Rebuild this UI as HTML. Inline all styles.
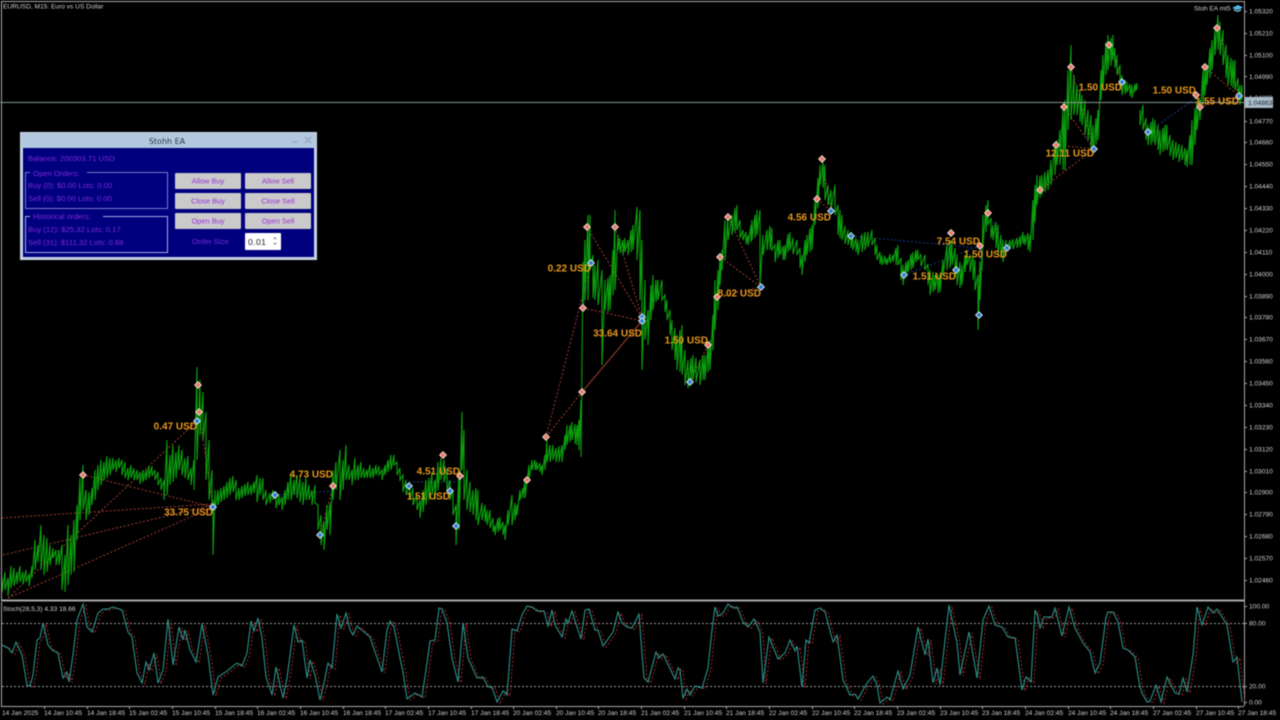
<!DOCTYPE html>
<html><head><meta charset="utf-8"><title>EURUSD M15</title>
<style>
html,body{margin:0;padding:0;background:#000;width:1280px;height:720px;overflow:hidden}
svg{display:block;filter:blur(.4px)}
text{font-family:"Liberation Sans",sans-serif}
.ax text{font-size:6.6px;fill:#cfcfcf}
.usd text{font-size:10px;font-weight:bold;fill:#e8981c;text-anchor:end}
.r{fill:#e87a68;stroke:#f6d8d0;stroke-width:1}
.b{fill:#2f7fd0;stroke:#d8e8f4;stroke-width:1}
.pt text{font-size:7.7px;fill:#7d28d4}
.bt text{font-size:7.4px;fill:#9a30d8;text-anchor:middle}
</style></head><body>
<svg width="1280" height="720" viewBox="0 0 1280 720" xmlns="http://www.w3.org/2000/svg">
<rect width="1280" height="720" fill="#000"/>
<!-- trade lines -->
<g fill="none" stroke="#a04030" stroke-width="1" stroke-dasharray="2 2">
<path d="M83 475L213 507M2 518L213 504M3 555L213 505M8 598L213 507M8 598L197 421M199 412L213 507"/>
<path d="M546 437L591 263M546 437L582 392M583 308L642 321M587 227L642 318M615 227L642 318"/>
<path d="M720 257L761 287M728 217L761 287M717 297L761 287M817 199L831 211M822 159L831 211"/>
<path d="M1064 107L1094 149M1071 67L1094 149M1040 190L1094 149M1056 145L1094 149M1109 45L1122 82M1217 28L1239 96M1205 67L1239 96M1200 107L1239 96M708 345L690 382M333 486L320 535M460 476L456 526"/>
</g>
<path d="M582 392L642 321" stroke="#a04030" stroke-width="1" fill="none"/>
<g fill="none" stroke="#1c3a88" stroke-width="1" stroke-dasharray="2 2">
<path d="M275 495L333 491M409 482L460 482M851 236L980 248M904 275L980 246M1007 248L988 213M1148 132L1196 98M591 263L583 308M450 491L443 455M979 315L980 246"/>
</g>
<!-- price -->
<polyline fill="none" stroke="#0aa00c" stroke-width="1.1" points="2,578 2,592 5,572 5,590 8,578 8,596 11,566 11,588 14,568 14,586 17,572 17,584 20,566 20,582 23,572 23,584 26,570 26,582 29,574 29,586 32,566 32,578 35,540 35,570 38,545 38,562 41,525 41,570 44,535 44,575 47,538 47,572 50,545 50,565 53,548 53,558 56,550 56,565 59,550 59,565 62,545 62,590 65,555 65,592 68,525 68,585 71,535 71,575 74,520 74,572 77,505 77,540 80,478 80,520 83,465 83,510 86,490 86,520 89,492 89,515 92,488 92,505 95,470 95,500 98,465 98,490 101,460 101,485 104,462 104,480 107,456 107,478 110,458 110,475 113,458 113,470 116,460 116,472 119,458 119,468 122,460 122,475 125,462 125,478 128,468 128,480 131,465 131,478 134,468 134,480 137,470 137,480 140,472 140,484 143,470 143,482 146,470 146,480 149,466 149,478 152,466 152,476 155,470 155,480 158,472 158,485 161,478 161,490 164,480 164,500 167,440 167,495 170,455 170,485 173,445 173,482 176,452 176,478 179,445 179,470 182,450 182,475 185,458 185,478 188,456 188,480 191,468 191,485 194,460 194,490 197,367 197,460 200,380 200,435 203,392 203,440 206,412 206,480 209,440 209,500 212,470 212,510 213,500 213,555 215,490 215,510 218,490 218,505 221,488 221,502 224,486 224,500 227,482 227,498 230,478 230,495 233,476 233,492 236,480 236,500 239,488 239,500 242,486 242,498 245,484 245,496 248,482 248,495 251,485 251,495 254,482 254,493 257,475 257,502 260,478 260,495 263,478 263,500 266,490 266,505 270,493 270,503 273,490 273,500 276,492 276,508 279,495 279,505 282,497 282,510 285,490 285,505 288,482 288,500 291,473 291,500 294,480 294,495 297,475 297,498 300,478 300,502 303,482 303,505 306,478 306,500 309,485 309,500 312,490 312,505 315,485 315,503 318,505 318,530 321,515 321,545 324,522 324,550 327,505 327,530 330,503 330,535 333,470 333,500 336,462 336,490 340,450 340,500 343,460 343,490 346,445 346,480 349,465 349,480 352,470 352,485 355,458 355,480 358,465 358,480 361,462 361,478 364,468 364,478 367,470 367,478 370,465 370,478 373,468 373,478 376,465 376,475 379,466 379,475 382,470 382,480 385,465 385,475 388,460 388,472 391,455 391,470 394,455 394,465 397,462 397,475 400,468 400,480 403,475 403,492 406,480 406,495 410,484 410,500 413,488 413,505 417,495 417,510 420,500 420,518 423,490 423,512 426,480 426,505 429,478 429,500 432,472 432,495 435,480 435,500 438,462 438,490 441,458 441,480 444,460 444,482 447,470 447,490 450,480 450,500 453,490 453,515 456,505 456,545 459,470 459,530 462,412 462,470 464,430 464,500 467,470 467,510 470,482 470,512 473,490 473,515 476,488 476,520 478,490 478,525 482,503 482,520 485,505 485,522 487,510 487,525 490,510 490,528 493,518 493,532 495,525 495,535 498,518 498,532 500,517 500,530 503,522 503,535 505,525 505,540 508,510 508,525 512,495 512,525 515,503 515,520 517,505 517,515 520,490 520,500 523,488 523,498 525,478 525,498 529,465 529,480 532,460 532,470 535,460 535,470 537,462 537,470 540,463 540,472 542,465 542,475 545,455 545,470 547,440 547,462 550,445 550,462 553,445 553,460 556,448 556,462 559,446 559,462 562,445 562,462 565,435 565,450 567,425 567,445 570,425 570,442 572,422 572,440 575,424 575,444 577,425 577,445 579,420 579,450 581,400 581,457 583,262 583,310 585,240 585,300 588,215 588,300 590,215 590,270 593,255 593,298 595,265 595,300 598,260 598,305 602,270 602,365 605,280 605,310 608,278 608,312 610,275 610,310 613,250 613,295 615,210 615,290 618,235 618,250 620,238 620,253 623,240 623,255 625,238 625,252 628,240 628,255 631,230 631,252 633,225 633,250 637,207 637,260 640,210 640,300 642,240 642,370 645,280 645,340 648,310 648,345 651,285 651,320 653,275 653,310 656,280 656,302 658,280 658,300 662,280 662,300 665,295 665,312 667,300 667,320 670,310 670,335 672,320 672,350 675,328 675,360 677,335 677,370 680,330 680,372 682,325 682,375 685,350 685,385 688,360 688,388 691,358 691,382 693,355 693,380 696,358 696,382 700,360 700,385 703,355 703,380 705,355 705,380 708,345 708,372 710,340 710,370 713,315 713,350 715,280 715,330 718,270 718,310 720,255 720,285 722,250 722,270 725,220 725,260 728,215 728,240 732,215 732,235 735,208 735,232 737,205 737,230 740,220 740,238 743,230 743,240 746,232 746,244 748,235 748,245 751,225 751,242 752,220 752,240 755,215 755,238 757,210 757,235 760,210 760,285 763,235 763,255 767,230 767,250 770,226 770,250 772,228 772,250 775,245 775,262 778,240 778,258 780,240 780,255 783,246 783,260 785,245 785,260 788,234 788,252 790,232 790,250 793,238 793,254 797,240 797,255 800,248 800,268 802,255 802,275 805,240 805,262 807,235 807,255 810,228 810,252 812,225 812,250 815,200 815,225 818,178 818,208 820,165 820,185 823,162 823,188 825,165 825,200 828,185 828,205 831,190 831,210 835,185 835,215 838,205 838,235 840,210 840,238 842,215 842,240 845,226 845,244 848,230 848,245 851,232 851,248 853,235 853,250 856,238 856,252 858,240 858,255 862,234 862,252 865,232 865,250 868,232 868,247 872,230 872,245 875,238 875,255 877,245 877,260 880,252 880,264 882,255 882,265 885,256 885,264 887,258 887,265 890,254 890,263 893,255 893,262 896,248 896,265 898,245 898,265 901,258 901,280 903,265 903,285 906,262 906,276 908,260 908,272 911,254 911,270 913,252 913,268 916,250 916,262 918,250 918,260 921,254 921,266 925,255 925,270 928,264 928,285 930,270 930,295 933,272 933,292 935,275 935,290 938,274 938,293 940,275 940,292 943,260 943,275 947,245 947,270 950,240 950,268 952,240 952,265 955,248 955,278 957,255 957,285 960,262 960,288 962,265 962,285 965,255 965,272 967,250 967,265 970,255 970,272 973,255 973,280 975,260 975,290 978,275 978,330 980,262 980,300 982,250 982,270 983,215 983,245 986,205 986,232 988,200 988,225 991,218 991,238 993,225 993,240 996,222 996,248 998,225 998,255 1001,235 1001,258 1003,240 1003,262 1006,240 1006,252 1010,240 1010,248 1013,239 1013,249 1017,238 1017,248 1020,236 1020,247 1023,232 1023,244 1025,235 1025,245 1028,233 1028,250 1030,235 1030,252 1033,200 1033,240 1035,185 1035,222 1037,175 1037,205 1040,176 1040,198 1042,175 1042,195 1045,172 1045,192 1048,170 1048,190 1051,160 1051,185 1055,145 1055,175 1057,140 1057,165 1060,130 1060,165 1063,110 1063,170 1065,100 1065,170 1068,70 1068,130 1071,45 1071,120 1074,75 1074,115 1077,85 1077,115 1080,90 1080,122 1082,95 1082,125 1085,100 1085,135 1088,110 1088,140 1091,115 1091,150 1093,125 1093,155 1096,118 1096,145 1098,110 1098,140 1101,70 1101,100 1103,55 1103,90 1106,42 1106,75 1108,35 1108,70 1111,38 1111,66 1113,35 1113,60 1115,48 1115,68 1117,55 1117,75 1120,65 1120,88 1122,75 1122,95 1125,80 1125,94 1127,82 1127,92 1130,84 1130,96 1132,85 1132,98 1135,84 1135,92 1137,83 1137,90"/>
<polyline fill="none" stroke="#0aa00c" stroke-width="1.1" points="1140,110 1140,125 1143,105 1143,130 1146,118 1146,140 1148,125 1148,145 1151,122 1151,145 1153,118 1153,142 1155,120 1155,145 1158,125 1158,150 1160,130 1160,155 1163,128 1163,152 1165,125 1165,150 1167,125 1167,150 1170,135 1170,156 1173,140 1173,160 1176,142 1176,158 1179,144 1179,162 1182,145 1182,160 1185,148 1185,165 1187,150 1187,167 1190,135 1190,165 1192,120 1192,165 1195,108 1195,145 1197,100 1197,130 1200,100 1200,120 1203,70 1203,105 1205,66 1205,95 1207,65 1207,85 1210,48 1210,78 1212,40 1212,70 1215,30 1215,55 1218,15 1218,50 1220,22 1220,55 1223,30 1223,65 1226,45 1226,78 1228,55 1228,85 1231,58 1231,86 1233,60 1233,88 1235,60 1235,90 1238,78 1238,100 1240,85 1240,105 1242,85 1242,100"/>
<!-- frame -->
<path d="M1 1.5H1244M1.5 1V600M1244.5 1V706" stroke="#a8a8a8" stroke-width="1" fill="none"/>
<path d="M1 600.5H1244" stroke="#a8a8a8" stroke-width="2" fill="none"/>
<path d="M1.5 602V706M1 706.5H1244" stroke="#a8a8a8" stroke-width="1" fill="none"/>
<!-- bid line -->
<path d="M0 102.5H1245" stroke="#8a9696" stroke-width="1" fill="none"/>
<!-- markers -->
<defs><path id="d" d="M0-3.3L3.3 0L0 3.3L-3.3 0Z"/></defs>
<g class="r">
<use href="#d" x="83" y="475"/><use href="#d" x="198" y="385"/><use href="#d" x="199" y="412"/><use href="#d" x="333" y="486"/><use href="#d" x="443" y="455"/><use href="#d" x="460" y="476"/><use href="#d" x="527" y="480"/><use href="#d" x="546" y="437"/><use href="#d" x="583" y="308"/><use href="#d" x="582" y="392"/><use href="#d" x="587" y="227"/><use href="#d" x="615" y="227"/><use href="#d" x="708" y="345"/><use href="#d" x="717" y="297"/><use href="#d" x="720" y="257"/><use href="#d" x="728" y="217"/><use href="#d" x="822" y="159"/><use href="#d" x="817" y="199"/><use href="#d" x="951" y="233"/><use href="#d" x="980" y="246"/><use href="#d" x="988" y="213"/><use href="#d" x="1040" y="190"/><use href="#d" x="1056" y="145"/><use href="#d" x="1064" y="107"/><use href="#d" x="1071" y="67"/><use href="#d" x="1109" y="45"/><use href="#d" x="1217" y="28"/><use href="#d" x="1205" y="67"/><use href="#d" x="1196" y="95"/><use href="#d" x="1200" y="107"/>
</g>
<g class="b">
<use href="#d" x="197" y="421"/><use href="#d" x="213" y="507"/><use href="#d" x="275" y="495"/><use href="#d" x="320" y="535"/><use href="#d" x="409" y="486"/><use href="#d" x="450" y="491"/><use href="#d" x="456" y="526"/><use href="#d" x="591" y="263"/><use href="#d" x="642" y="317"/><use href="#d" x="642" y="321"/><use href="#d" x="690" y="382"/><use href="#d" x="761" y="287"/><use href="#d" x="831" y="211"/><use href="#d" x="851" y="236"/><use href="#d" x="904" y="275"/><use href="#d" x="956" y="270"/><use href="#d" x="979" y="315"/><use href="#d" x="1007" y="248"/><use href="#d" x="1094" y="149"/><use href="#d" x="1122" y="82"/><use href="#d" x="1148" y="132"/><use href="#d" x="1239" y="96"/>
</g>
<!-- USD labels -->
<g class="usd">
<text x="197" y="429.5">0.47 USD</text><text x="213" y="515.5">33.75 USD</text><text x="333" y="477.5">4.73 USD</text><text x="460" y="474.5">4.51 USD</text><text x="450" y="499.5">1.51 USD</text><text x="591" y="271.5">0.22 USD</text><text x="642" y="336.5">33.64 USD</text><text x="708" y="343.5">1.50 USD</text><text x="761" y="296.5">8.02 USD</text><text x="831" y="220.5">4.56 USD</text><text x="980" y="244.5">7.54 USD</text><text x="1007" y="257.5">1.50 USD</text><text x="956" y="279.5">1.51 USD</text><text x="1094" y="156.5">12.11 USD</text><text x="1122" y="90.5">1.50 USD</text><text x="1196" y="93.5">1.50 USD</text><text x="1239" y="104.5">1.55 USD</text>
</g>
<!-- stochastic -->
<path d="M2 623.5H1244M2 686.5H1244" stroke="#9c9c9c" stroke-width="1" stroke-dasharray="2 2" fill="none"/>
<defs><polyline id="st" fill="none" points="2,645 8,648 12,653 16,642 22,655 27,685 30,686 33,675 37,640 40,638 43,623 48,645 52,650 58,653 63,678 67,672 69,682 73,655 77,620 83,604 87,627 92,632 98,613 103,609 108,609 113,607 122,610 128,632 132,637 137,673 142,683 146,662 149,670 154,653 158,683 163,670 168,619 173,665 179,627 183,640 185,630 190,650 196,662 202,624 208,655 213,695 218,677 227,671 237,663 242,666 247,653 251,621 254,631 258,618 262,638 266,677 272,695 276,667 283,698 287,678 294,625 298,642 302,640 307,678 310,660 315,675 320,700 324,683 328,663 332,668 337,614 341,628 346,613 350,630 353,635 357,626 370,637 375,652 382,672 387,630 390,621 394,627 400,658 403,672 407,699 415,693 422,697 427,663 430,641 435,640 439,608 442,609 447,623 452,658 458,682 463,623 468,658 477,678 483,677 488,687 492,687 497,702 503,691 507,695 512,629 517,631 522,615 527,606 532,607 537,611 544,611 548,626 552,610 555,625 562,637 566,619 568,623 572,611 578,630 581,639 585,610 589,609 595,630 598,630 603,646 613,632 618,612 622,623 627,627 632,628 639,614 642,653 644,678 648,682 656,652 659,658 663,654 675,679 678,668 680,670 683,698 687,689 690,695 695,686 702,688 708,668 712,630 715,607 718,616 723,613 728,604 733,608 737,607 743,622 748,627 754,619 760,632 763,683 769,637 778,659 785,653 790,640 795,651 797,646 802,687 806,640 809,643 815,610 820,608 825,612 833,642 837,635 843,680 850,695 855,694 858,699 867,683 873,676 877,685 880,703 887,697 890,700 898,671 903,689 910,675 918,627 925,655 928,639 933,683 937,668 940,685 949,605 957,643 960,675 969,632 977,678 983,620 989,606 995,625 1002,627 1008,637 1015,638 1022,690 1026,677 1031,682 1035,610 1038,617 1040,628 1044,617 1052,617 1055,608 1062,636 1069,607 1075,628 1083,643 1090,652 1095,673 1100,663 1106,617 1108,612 1113,612 1118,622 1123,648 1128,650 1135,657 1139,682 1142,693 1147,702 1150,701 1156,685 1161,702 1167,677 1175,693 1179,694 1183,678 1187,692 1193,655 1197,607 1202,625 1208,607 1213,613 1217,609 1227,625 1233,662 1237,657 1242,702"/></defs>
<use href="#st" x="3" y="1" stroke="#a82828" stroke-width="1" stroke-dasharray="2 2"/>
<use href="#st" stroke="#2c9f98" stroke-width="1"/>
<!-- top texts -->
<g class="ax">
<text x="3" y="8.5">EURUSD, M15:  Euro vs US Dollar</text>
<text x="1194" y="10.5">Stoh EA mt5</text>
<text x="3" y="611">Stoch(28,5,3) 4.33 18.66</text>
</g>
<path d="M1232 8L1238 5L1243 7.5L1238 10Z" fill="#58b8ee"/><path d="M1234 10.5L1238 12L1241 10.5V9L1238 11L1234 9Z" fill="#9fd8f4"/>
<!-- price axis -->
<g stroke="#a8a8a8" stroke-width="1"><path d="M1244 11.5h3M1244 33.5h3M1244 55.5h3M1244 76.5h3M1244 98.5h3M1244 121.5h3M1244 142.5h3M1244 164.5h3M1244 186.5h3M1244 208.5h3M1244 230.5h3M1244 252.5h3M1244 274.5h3M1244 296.5h3M1244 317.5h3M1244 339.5h3M1244 361.5h3M1244 383.5h3M1244 405.5h3M1244 427.5h3M1244 449.5h3M1244 471.5h3M1244 492.5h3M1244 514.5h3M1244 536.5h3M1244 558.5h3M1244 580.5h3M1244 606.5h3M1244 623.5h3M1244 686.5h3M1244 702.5h3"/></g>
<g class="ax">
<text x="1249" y="13.5">1.05320</text><text x="1249" y="35.5">1.05210</text><text x="1249" y="57.5">1.05100</text><text x="1249" y="79">1.04990</text><text x="1249" y="100">1.04880</text><text x="1249" y="123.5">1.04770</text><text x="1249" y="144.5">1.04660</text><text x="1249" y="166.5">1.04550</text><text x="1249" y="188.5">1.04440</text><text x="1249" y="210.5">1.04330</text><text x="1249" y="232.5">1.04220</text><text x="1249" y="254.5">1.04110</text><text x="1249" y="276.5">1.04000</text><text x="1249" y="298.5">1.03890</text><text x="1249" y="319.5">1.03780</text><text x="1249" y="341.5">1.03670</text><text x="1249" y="363.5">1.03560</text><text x="1249" y="385.5">1.03450</text><text x="1249" y="407.5">1.03340</text><text x="1249" y="429.5">1.03230</text><text x="1249" y="451.5">1.03120</text><text x="1249" y="473.5">1.03010</text><text x="1249" y="494.5">1.02900</text><text x="1249" y="516.5">1.02790</text><text x="1249" y="538.5">1.02680</text><text x="1249" y="560.5">1.02570</text><text x="1249" y="582.5">1.02460</text>
<text x="1249" y="608.5">100.00</text><text x="1249" y="625.5">80.00</text><text x="1249" y="688.5">20.00</text><text x="1249" y="704.5">0.00</text>
</g>
<rect x="1245" y="97" width="28" height="11" fill="#a8bcc8"/>
<text x="1248" y="105" style="font-size:6.8px" fill="#1a2430">1.04863</text>
<!-- time axis -->
<path d="M44.5 706v3M87.5 706v3M129.5 706v3M172.5 706v3M215.5 706v3M257.5 706v3M300.5 706v3M343.5 706v3M385.5 706v3M428.5 706v3M471.5 706v3M513.5 706v3M556.5 706v3M598.5 706v3M641.5 706v3M684.5 706v3M726.5 706v3M769.5 706v3M812.5 706v3M854.5 706v3M897.5 706v3M940.5 706v3M982.5 706v3M1025.5 706v3M1068.5 706v3M1110.5 706v3M1153.5 706v3M1196.5 706v3M1238.5 706v3" stroke="#a8a8a8" stroke-width="1" fill="none"/>
<g class="ax">
<text x="2" y="715">14 Jan 2025</text><text x="44" y="715">14 Jan 10:45</text><text x="87" y="715">14 Jan 18:45</text><text x="129" y="715">15 Jan 02:45</text><text x="172" y="715">15 Jan 10:45</text><text x="215" y="715">15 Jan 18:45</text><text x="257" y="715">16 Jan 02:45</text><text x="300" y="715">16 Jan 10:45</text><text x="343" y="715">16 Jan 18:45</text><text x="385" y="715">17 Jan 02:45</text><text x="428" y="715">17 Jan 10:45</text><text x="471" y="715">17 Jan 18:45</text><text x="513" y="715">20 Jan 02:45</text><text x="556" y="715">20 Jan 10:45</text><text x="598" y="715">20 Jan 18:45</text><text x="641" y="715">21 Jan 02:45</text><text x="684" y="715">21 Jan 10:45</text><text x="726" y="715">21 Jan 18:45</text><text x="769" y="715">22 Jan 02:45</text><text x="812" y="715">22 Jan 10:45</text><text x="854" y="715">22 Jan 18:45</text><text x="897" y="715">23 Jan 02:45</text><text x="940" y="715">23 Jan 10:45</text><text x="982" y="715">23 Jan 18:45</text><text x="1025" y="715">24 Jan 02:45</text><text x="1068" y="715">24 Jan 10:45</text><text x="1110" y="715">24 Jan 18:45</text><text x="1153" y="715">27 Jan 02:45</text><text x="1196" y="715">27 Jan 10:45</text><text x="1238" y="715">27 Jan 18:45</text>
</g>
<!-- panel -->
<rect x="20.5" y="132.5" width="296" height="127" fill="#c4d2e2" stroke="#c8d6e6"/>
<rect x="21" y="133" width="295" height="15" fill="#b2c8de"/>
<rect x="23" y="148" width="291" height="109" fill="#00007e"/>
<text x="167" y="144" text-anchor="middle" style="font-size:8px;font-family:'DejaVu Sans',sans-serif" fill="#2c3848">Stohh EA</text>
<path d="M292 142h6" stroke="#9aacc0" stroke-width="1.5"/>
<path d="M305 137l6 6m0-6l-6 6" stroke="#9aacc0" stroke-width="1.6"/>
<path d="M87 172.5H167.5V208.5H25.5V172.5H30" fill="none" stroke="#7878cc" stroke-width="1"/>
<path d="M103 216.5H167.5V252.5H25.5V216.5H30" fill="none" stroke="#a8a8e4" stroke-width="1"/>
<g class="pt">
<text x="28" y="161">Balance: 200303.71 USD</text>
<text x="33" y="176">Open Orders:</text>
<text x="28" y="188">Buy (0): $0.00 Lots: 0.00</text>
<text x="28" y="201">Sell (0): $0.00 Lots: 0.00</text>
<text x="33" y="219">Historical orders:</text>
<text x="28" y="232">Buy (12): $25.32 Lots: 0.17</text>
<text x="28" y="245">Sell (31): $111.32 Lots: 0.88</text>
<text x="192" y="244">Order Size</text>
</g>
<g fill="#cacaca">
<rect x="175" y="173" width="66" height="16" rx="1"/><rect x="245" y="173" width="66" height="16" rx="1"/>
<rect x="175" y="193" width="66" height="16" rx="1"/><rect x="245" y="193" width="66" height="16" rx="1"/>
<rect x="175" y="213" width="66" height="16" rx="1"/><rect x="245" y="213" width="66" height="16" rx="1"/>
</g>
<g class="bt">
<text x="208" y="183.5">Allow Buy</text><text x="278" y="183.5">Allow Sell</text>
<text x="208" y="203.5">Close Buy</text><text x="278" y="203.5">Close Sell</text>
<text x="208" y="223.5">Open Buy</text><text x="278" y="223.5">Open Sell</text>
</g>
<rect x="245" y="233" width="36" height="17" rx="1" fill="#fff"/>
<text x="248" y="245" style="font-size:8.6px;letter-spacing:.4px" fill="#222">0.01</text>
<path d="M273 239l2-2 2 2zM273 243l2 2 2-2z" fill="#888"/>
</svg>
</body></html>
